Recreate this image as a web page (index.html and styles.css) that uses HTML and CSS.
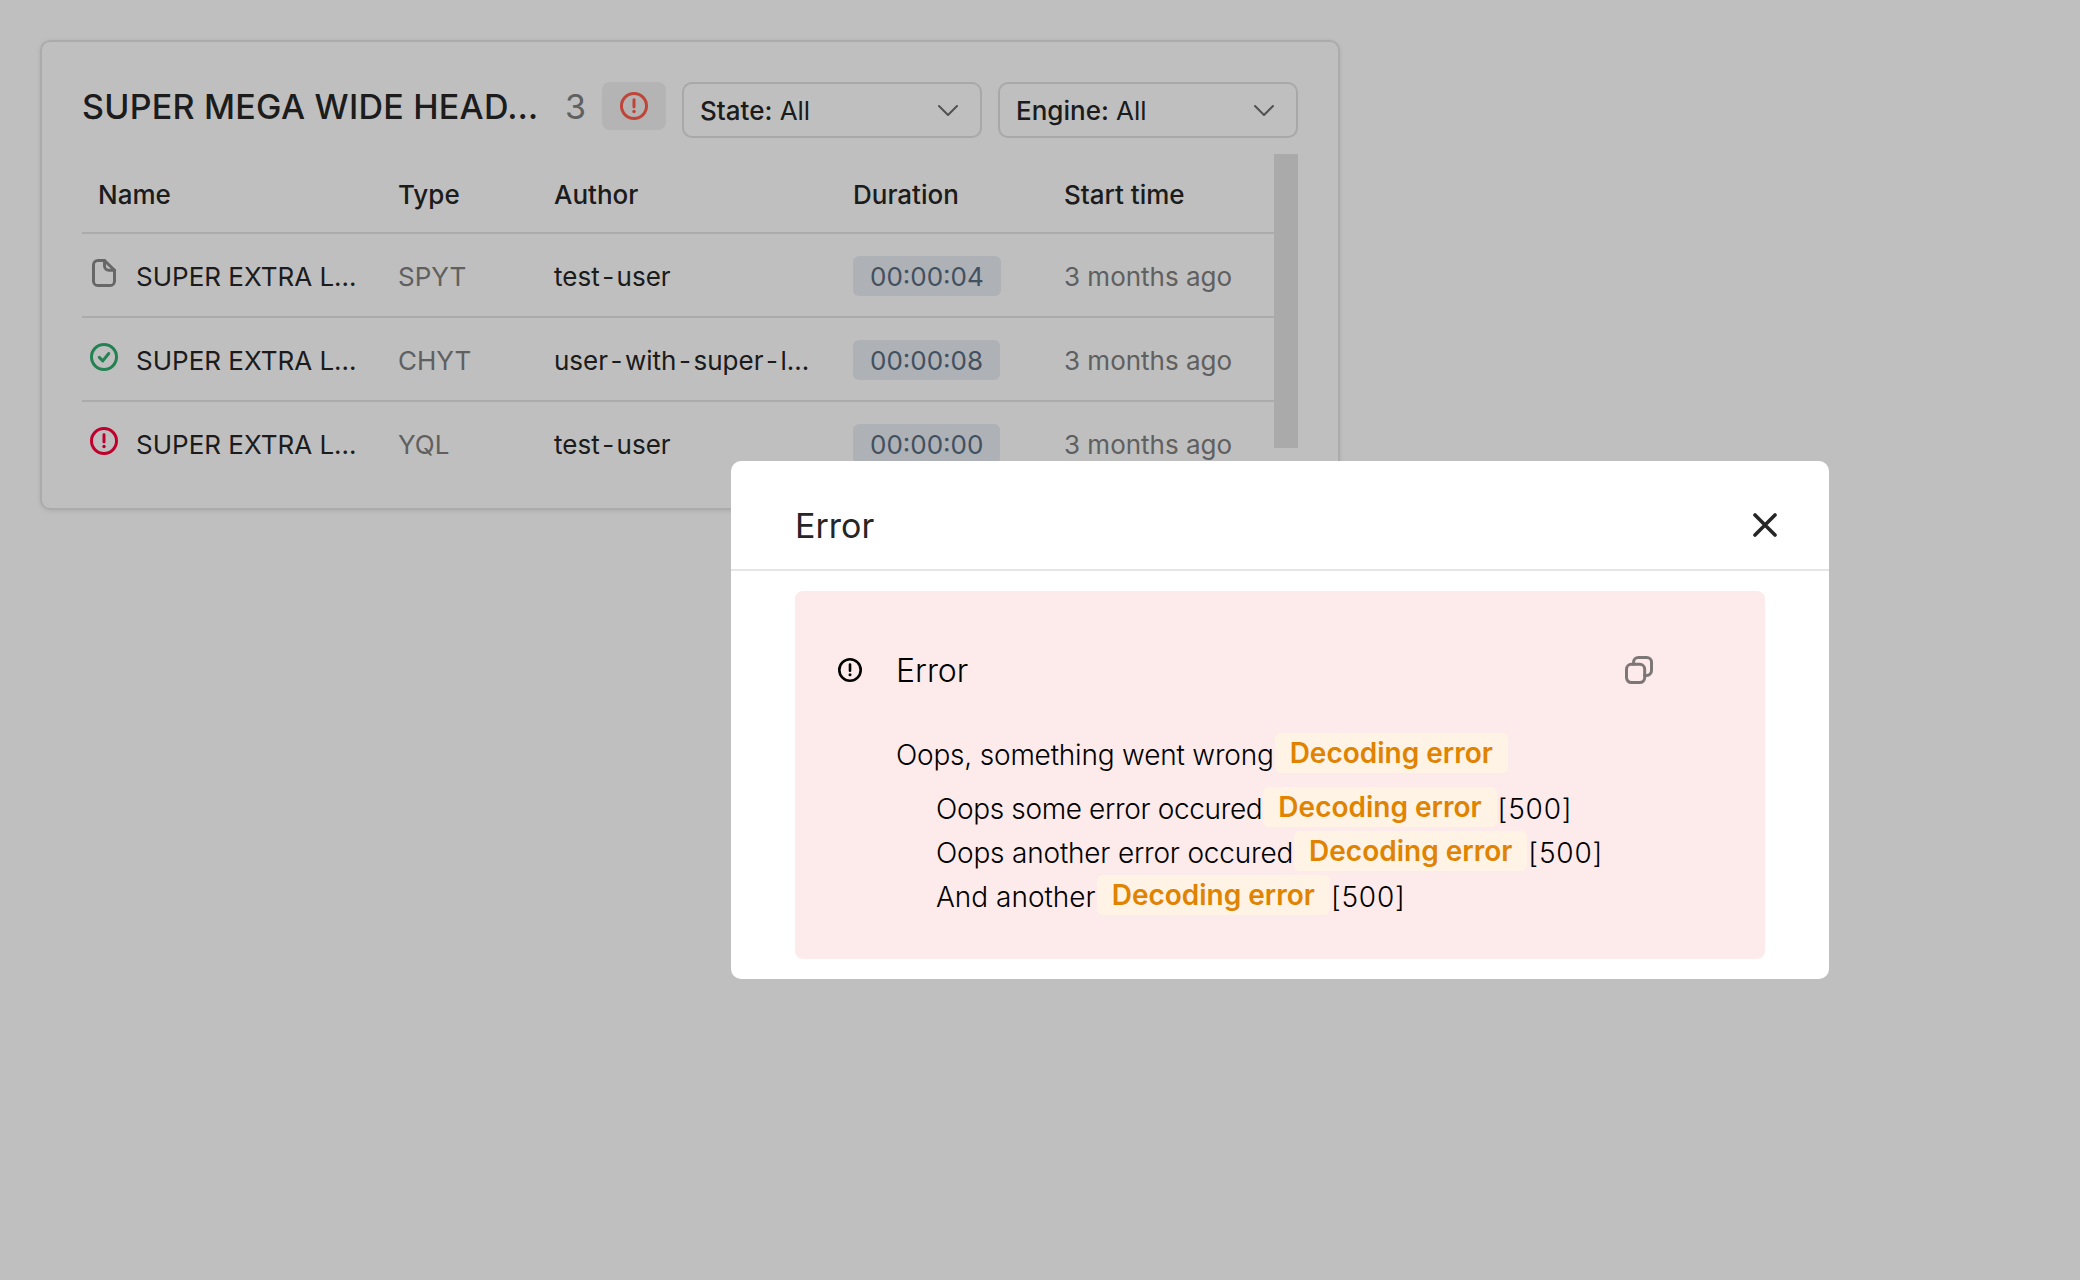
FILE: index.html
```html
<!DOCTYPE html>
<html lang="en">
<head>
  <meta charset="UTF-8">
  <title>Operations</title>
  <link rel="stylesheet" href="styles.css">
</head>
<body>

  <div class="card">
    <div class="card-head">
      <h2 class="card-title">SUPER MEGA WIDE HEAD…</h2>
      <span class="card-count">3</span>
      <button class="err-btn">
        <svg class="icon-28 ic-warn" viewBox="0 0 16 16"><circle cx="8" cy="8" r="7.15"/><path d="M8 4.4v4.2"/><circle class="dot" cx="8" cy="11.2" r="1"/></svg>
      </button>
      <div class="filter"><span><b>State:</b> All</span><svg class="chevron" viewBox="0 0 20 11"><path d="M1 1l9 9 9-9"/></svg></div>
      <div class="filter"><span><b>Engine:</b> All</span><svg class="chevron" viewBox="0 0 20 11"><path d="M1 1l9 9 9-9"/></svg></div>
    </div>

    <div class="table-wrap">
      <table>
        <colgroup>
          <col class="col-name"><col class="col-type"><col class="col-author"><col class="col-dur"><col>
        </colgroup>
        <thead>
          <tr>
            <th>Name</th>
            <th>Type</th>
            <th>Author</th>
            <th>Duration</th>
            <th>Start time</th>
          </tr>
        </thead>
        <tbody>
          <tr>
            <td>
              <div class="name-cell">
                <svg class="icon-28 ic-file" viewBox="0 0 16 16"><path d="M4.5.85H8.3L14 6.4v6.25a2.5 2.5 0 0 1-2.5 2.5h-7a2.5 2.5 0 0 1-2.5-2.5v-9.3A2.5 2.5 0 0 1 4.5.85z"/><path d="M8.3.85V4a2.4 2.4 0 0 0 2.4 2.4H14"/></svg>
                <span>SUPER EXTRA L…</span>
              </div>
            </td>
            <td class="muted">SPYT</td>
            <td>test<span class="hy">-</span>user</td>
            <td><span class="dur">00:00:04</span></td>
            <td class="muted">3 months ago</td>
          </tr>
          <tr>
            <td>
              <div class="name-cell">
                <svg class="icon-28 ic-ok" viewBox="0 0 16 16"><circle cx="8" cy="8" r="7.15"/><path d="M5.3 8.2l2 2 3.4-4.2"/></svg>
                <span>SUPER EXTRA L…</span>
              </div>
            </td>
            <td class="muted">CHYT</td>
            <td>user<span class="hy">-</span>with<span class="hy">-</span>super<span class="hy">-</span>l…</td>
            <td><span class="dur">00:00:08</span></td>
            <td class="muted">3 months ago</td>
          </tr>
          <tr>
            <td>
              <div class="name-cell">
                <svg class="icon-28 ic-fail" viewBox="0 0 16 16"><circle cx="8" cy="8" r="7.15"/><path d="M8 4.4v4.2"/><circle class="dot" cx="8" cy="11.2" r="1"/></svg>
                <span>SUPER EXTRA L…</span>
              </div>
            </td>
            <td class="muted">YQL</td>
            <td>test<span class="hy">-</span>user</td>
            <td><span class="dur">00:00:00</span></td>
            <td class="muted">3 months ago</td>
          </tr>
        </tbody>
      </table>
      <div class="scrollbar"></div>
    </div>
  </div>

  <div class="veil"></div>

  <div class="modal">
    <div class="modal-head">
      <span class="modal-title">Error</span>
      <svg class="modal-close" viewBox="0 0 24 24"><path d="M2 2l20 20M22 2L2 22"/></svg>
    </div>
    <div class="alert">
      <div class="alert-head">
        <svg class="alert-icon" viewBox="0 0 24 24"><circle cx="12" cy="12" r="10.7"/><path d="M12 6.5v6.2"/><circle class="dot" cx="12" cy="16.8" r="1.5"/></svg>
        <span class="alert-title">Error</span>
        <svg class="icon-28 copy" viewBox="0 0 16 16"><rect x=".85" y="4.75" width="10.4" height="10.4" rx="2.8"/><path d="M4.9 4.75V3.6A2.75 2.75 0 0 1 7.65.85h4.75a2.75 2.75 0 0 1 2.75 2.75v4.75a2.75 2.75 0 0 1-2.75 2.75h-1.15"/></svg>
      </div>
      <div class="msg">
        <div class="msg-line tight"><span>Oops, something went wrong</span> <span class="tag">Decoding error</span></div>
        <div class="msg-list">
          <div class="msg-line tighter"><span>Oops some error occured</span> <span class="tag">Decoding error</span> <span class="code">[500]</span></div>
          <div class="msg-line tight"><span>Oops another error occured</span> <span class="tag">Decoding error</span> <span class="code">[500]</span></div>
          <div class="msg-line"><span>And another</span> <span class="tag">Decoding error</span> <span class="code">[500]</span></div>
        </div>
      </div>
    </div>
  </div>

</body>
</html>
```

FILE: styles.css
```css
body {
  margin: 0;
  padding: 40px;
  height: 1280px;
  box-sizing: border-box;
  background-color: #fff;
  font-family: Inter, sans-serif;
  font-size: 26px;
  color: #262626;
  overflow: hidden;
}

svg {
  flex: none;
  fill: none;
  stroke: currentColor;
  stroke-width: 1.7;
  stroke-linecap: round;
  stroke-linejoin: round;
}

svg .dot {
  fill: currentColor;
  stroke: none;
}

.icon-28 {
  width: 28px;
  height: 28px;
}

.ic-warn { color: #ff5c4d; }
.ic-file { color: #8a8a8a; }
.ic-ok { color: #2fad6e; }
.ic-fail { color: #ff003d; }

.card {
  width: 1300px;
  height: 470px;
  box-sizing: border-box;
  padding: 40px 40px 24px;
  border: 2px solid #e5e5e5;
  border-radius: 10px;
  box-shadow: 0 1px 4px rgba(0, 0, 0, 0.1);
}

.card-head {
  display: flex;
  align-items: flex-start;
  height: 56px;
}

.card-title {
  margin: 0;
  font-size: 34px;
  font-weight: 500;
  letter-spacing: 0.25px;
  line-height: 50px;
  width: 456px;
  white-space: nowrap;
}

.card-count {
  margin-left: 27px;
  font-size: 34px;
  line-height: 50px;
  color: #808080;
}

.err-btn {
  display: flex;
  align-items: center;
  justify-content: center;
  width: 64px;
  height: 48px;
  margin-left: 16px;
  padding: 0;
  border: 0;
  border-radius: 8px;
  background-color: #f0f0f0;
}

.filter {
  display: flex;
  align-items: center;
  justify-content: space-between;
  width: 300px;
  height: 56px;
  box-sizing: border-box;
  margin-left: 16px;
  padding: 0 22px 0 16px;
  border: 2px solid #e0e0e0;
  border-radius: 10px;
  white-space: nowrap;
}

.filter b {
  font-weight: 500;
}

.chevron {
  width: 20px;
  height: 11px;
  stroke-width: 2;
  color: #6e6e6e;
}

.table-wrap {
  display: flex;
  align-items: flex-start;
  margin-top: 16px;
  height: 330px;
  overflow: hidden;
}

table {
  flex: 1;
  table-layout: fixed;
  border-collapse: collapse;
}

.col-name { width: 300px; }
.col-type { width: 156px; }
.col-author { width: 299px; }
.col-dur { width: 211px; }

th, td {
  padding: 2px 16px 0;
  text-align: left;
  white-space: nowrap;
}

th {
  height: 76px;
  font-weight: 500;
  border-bottom: 2px solid #e5e5e5;
}

td {
  height: 80px;
  border-bottom: 2px solid #e5e5e5;
}

tbody tr:last-child td {
  border-bottom: 0;
}

.name-cell {
  display: flex;
  align-items: center;
  gap: 18px;
  margin-left: -8px;
}

.name-cell svg {
  margin-top: -6px;
}

.hy {
  margin: 0 2.5px;
}

.muted {
  color: #808080;
}

.dur {
  display: inline-block;
  height: 40px;
  padding: 0 17px;
  line-height: 42px;
  border-radius: 6px;
  background-color: #e8edf2;
  color: #5a6b80;
}

.scrollbar {
  flex: none;
  width: 24px;
  height: 294px;
  background-color: #e3e3e3;
}

.veil {
  position: fixed;
  inset: 0;
  background-color: rgba(0, 0, 0, 0.25);
}

.modal {
  position: absolute;
  left: 731px;
  top: 461px;
  width: 1098px;
  height: 518px;
  border-radius: 10px;
  background-color: #fff;
}

.modal-head {
  display: flex;
  align-items: center;
  justify-content: space-between;
  height: 88px;
  padding: 20px 52px 0 64px;
  border-bottom: 2px solid #e5e5e5;
}

.modal-title {
  font-size: 34px;
}

.modal-close {
  width: 24px;
  height: 24px;
  stroke-width: 3.6;
}

.alert {
  box-sizing: border-box;
  height: 368px;
  margin: 20px 64px 0;
  padding: 57px 112px 0 43px;
  border-radius: 8px;
  background-color: #fdeaeb;
  color: #000;
}

.alert-head {
  display: flex;
  align-items: center;
  height: 44px;
}

.alert-icon {
  width: 24px;
  height: 24px;
  stroke-width: 2.6;
}

.alert-title {
  margin-left: 34px;
  font-size: 32px;
  font-weight: 300;
}

.copy {
  margin-left: auto;
  color: #7d7676;
}

.msg {
  margin: 41px 0 0 58px;
  font-size: 28px;
  font-weight: 300;
}

.msg-list {
  display: flex;
  flex-direction: column;
  gap: 4px;
  margin: 14px 0 0 40px;
}

.msg-line {
  display: flex;
  align-items: flex-start;
  gap: 1px;
  height: 40px;
  line-height: 44px;
  white-space: nowrap;
}

.tight > span:first-child { letter-spacing: -0.2px; }
.tighter > span:first-child { letter-spacing: -0.35px; }

.tag {
  height: 40px;
  padding: 0 15px;
  line-height: 41px;
  border-radius: 6px;
  background-color: #fff3e6;
  color: #e08300;
  font-weight: 600;
}

.code {
  letter-spacing: 0.8px;
}
```
